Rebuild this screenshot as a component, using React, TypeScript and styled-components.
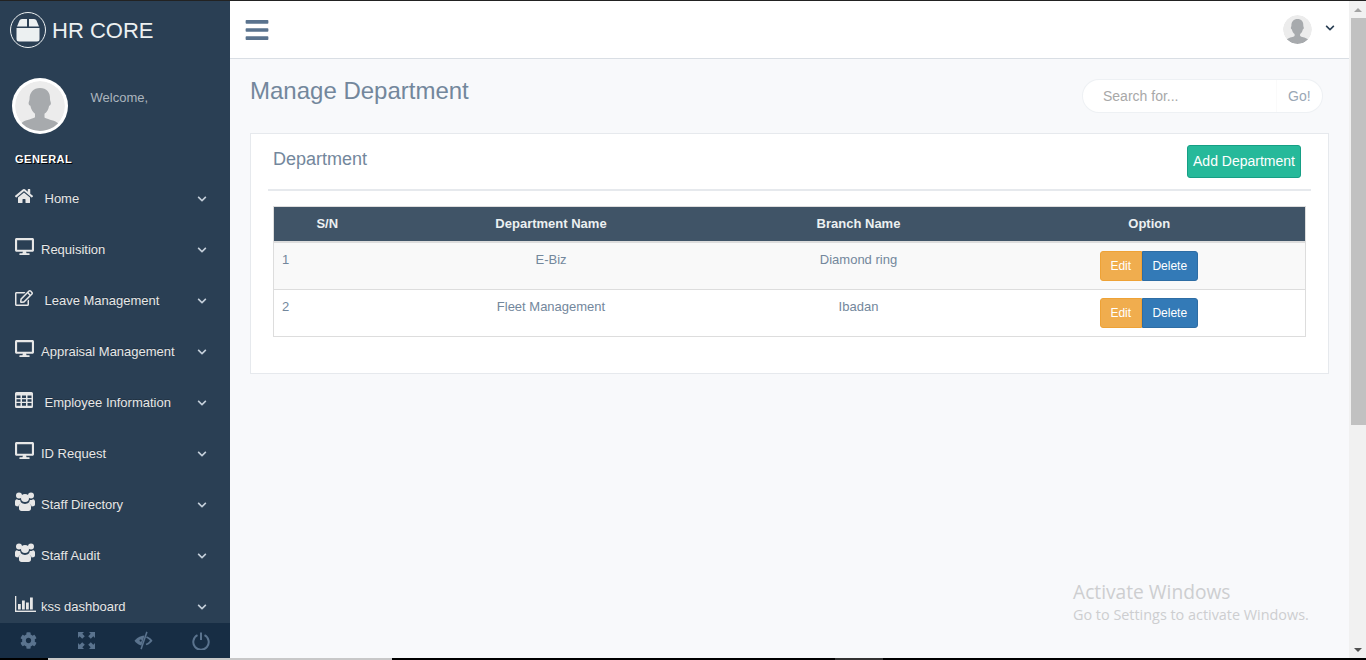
import React from "react";
import styled, { createGlobalStyle } from "styled-components";
import { FaBars, FaChevronDown, FaCog, FaDesktop, FaHome, FaRegEdit } from "react-icons/fa";

const Global = createGlobalStyle`
  html, body { margin: 0; padding: 0; height: 660px; overflow: hidden; }
  body { font-family: "Liberation Sans", Arial, sans-serif; font-size: 13px; color: #73879C; background: #F8F9FB; }
  * { box-sizing: border-box; }
`;

const Page = styled.div`
  width: 1366px; height: 660px; display: flex; flex-direction: column; position: relative; overflow: hidden;
`;
const TopEdge = styled.div` height: 1px; flex: none; background: #222; `;
const Body = styled.div` flex: 1; min-height: 0; display: flex; `;
const TaskStrip = styled.div` height: 2px; flex: none; display: flex; background: #000; `;
const TaskSegment = styled.div<{ $w: number; $c: string }>`
  width: ${p => p.$w}px; flex: none; background: ${p => p.$c};
`;

const Sidebar = styled.aside`
  width: 230px; flex: none; background: #2A3F54; display: flex; flex-direction: column; min-height: 0;
`;
const Brand = styled.div`
  height: 57px; flex: none; display: flex; align-items: center; padding: 1px 0 0 10px; gap: 6px;
  color: #ECF0F1; font-size: 22px;
`;
const BrandName = styled.span` margin-top: 2px; `;
const LogoRing = styled.div`
  width: 36px; height: 36px; border-radius: 50%; border: 1px solid #ECF0F1; display: flex;
  align-items: center; justify-content: center;
`;
const Profile = styled.div` height: 94px; flex: none; display: flex; padding: 20px 0 0 12px; `;
const ProfileAvatar = styled.div`
  width: 56px; height: 56px; border-radius: 50%; background: #fff; padding: 3px; flex: none;
`;
const Welcome = styled.div` margin: 12px 0 0 22.500px; color: #ACB5BE; font-size: 13px; line-height: 16px; `;
const SectionTitle = styled.h3`
  margin: 0; height: 21px; flex: none; padding-left: 15px; color: #fff; font-size: 11px; font-weight: 700;
  letter-spacing: .5px; line-height: 14px; text-transform: uppercase; text-shadow: 1px 1px #000;
`;
const Menu = styled.nav` flex: 1; min-height: 0; overflow: hidden; `;
const MenuItem = styled.a`
  height: 51px; display: flex; align-items: center; padding: 0 23px 0 15px; color: #E7E7E7; font-size: 13px;
  text-shadow: rgba(0,0,0,.25) 0 -1px 0;
`;
const MenuIcon = styled.span<{ $wide?: boolean }>`
  width: ${p => (p.$wide ? 29.5 : 26)}px; flex: none; display: flex; font-size: 18px; margin-top: -6px; color: #E7E7E7;
`;
const MenuLabel = styled.span` flex: 1; white-space: nowrap; `;
const MenuChevron = styled.span` display: flex; font-size: 10px; color: #C4CFDA; margin-top: 1px; `;
const SideFooter = styled.div`
  height: 35px; flex: none; background: #172D44; display: grid; grid-template-columns: repeat(4, 57.5px);
  color: #5A738E; font-size: 17px;
`;
const FooterIcon = styled.span` display: flex; align-items: center; justify-content: center; `;

const Main = styled.main` flex: 1; min-width: 0; display: flex; flex-direction: column; `;
const TopNav = styled.header`
  height: 58px; flex: none; background: #fff; border-bottom: 1px solid #D9DEE4; display: flex; align-items: center;
  padding: 0 14px 0 15px; justify-content: space-between;
`;
const Burger = styled.span` display: flex; color: #5A738E; font-size: 26px; margin-left: -1px; `;
const UserArea = styled.div` display: flex; align-items: center; gap: 13px; `;
const UserAvatar = styled.div` width: 29px; height: 29px; border-radius: 50%; overflow: hidden; `;
const UserChevron = styled.span` display: flex; font-size: 10px; color: #2A3F54; margin-top: -3px; `;
const Content = styled.div` flex: 1; min-height: 0; padding: 19px 20px 0; `;
const TitleRow = styled.div` height: 55px; display: flex; justify-content: space-between; `;
const PageTitle = styled.h3` margin: 0; font-size: 24px; font-weight: 400; line-height: 26px; color: #73879C; `;
const SearchBox = styled.div`
  width: 241px; height: 34px; margin: 1px 6px 0 0; border: 1px solid rgba(221,226,232,.49); border-radius: 25px; background: #fff; display: flex;
  font-size: 14px; line-height: 32px;
`;
const SearchInput = styled.div` flex: 1; padding-left: 20px; color: #A8A8A8; `;
const SearchGo = styled.div`
  width: 46px; padding-left: 11px; color: #9AA7B5; border-left: 1px solid #FAFAFA;
`;
const Panel = styled.section`
  height: 241px; background: #fff; border: 1px solid #E6E9ED; padding: 10px 17px 0;
`;
const PanelHead = styled.div`
  height: 47px; border-bottom: 2px solid #E6E9ED; display: flex; justify-content: space-between; padding: 0 10px 0 5px;
`;
const PanelTitle = styled.h2` margin: 5px 0 0; font-size: 18px; font-weight: 400; line-height: 20px; color: #73879C; `;
const AddButton = styled.button`
  width: 114px; height: 33px; margin-top: 1px; background: #26B99A; border: 1px solid #169F85; border-radius: 3px; color: #fff; font: 14px "Liberation Sans", Arial, sans-serif;
  padding: 0 0 2px;
`;
const Table = styled.table`
  width: 1032px; margin: 15px 0 0 5px; border-collapse: collapse; table-layout: fixed; border: 1px solid #DDD;
`;
const HeadRow = styled.tr` height: 35px; background: #405467; color: #ECF0F1; border-bottom: 2px solid #DDD; `;
const Th = styled.th<{ $shift?: boolean }>`
  font-size: 13px; font-weight: 700; text-align: center; padding: 0 ${p => (p.$shift ? 2 : 0)}px 0 0;
`;
const Row = styled.tr<{ $odd?: boolean }>`
  height: ${p => (p.$odd ? 48 : 47)}px; background: ${p => (p.$odd ? "#F9F9F9" : "#fff")}; border-top: 1px solid #DDD;
`;
const Td = styled.td<{ $left?: boolean }>`
  font-size: 13px; line-height: 18px; padding: 8px 8px 0; vertical-align: top; text-align: ${p => (p.$left ? "left" : "center")};
`;
const BtnGroup = styled.div` display: flex; justify-content: center; margin: 0 0 0 -3px; `;
const GroupBtn = styled.button<{ $kind: "edit" | "del" }>`
  height: 30px; padding: 0; font: 12px "Liberation Sans", Arial, sans-serif; color: #fff;
  width: ${p => (p.$kind === "edit" ? 42 : 56)}px;
  background: ${p => (p.$kind === "edit" ? "#F0AD4E" : "#337AB7")};
  border: 1px solid ${p => (p.$kind === "edit" ? "#EEA236" : "#2E6DA4")};
  border-radius: ${p => (p.$kind === "edit" ? "3px 0 0 3px" : "0 3px 3px 0")};
`;

const Scrollbar = styled.div` width: 17px; flex: none; background: #F1F1F1; display: flex; flex-direction: column; align-items: flex-end; `;
const ScrollEnd = styled.div` width: 17px; height: 17px; flex: none; display: flex; align-items: center; justify-content: center; `;
const ArrowUp = styled.div` border: 4px solid transparent; border-top: 0; border-bottom: 4px solid #A3A3A3; `;
const ArrowDown = styled.div` border: 4px solid transparent; border-bottom: 0; border-top: 4px solid #505050; `;
const ScrollThumb = styled.div` width: 15px; height: 407px; flex: none; background: #C1C1C1; `;
const ScrollRest = styled.div` flex: 1; `;

const Watermark = styled.div`
  position: absolute; left: 1073px; top: 578px; color: #CDCED0; font-family: "Open Sans", sans-serif;
`;
const WatermarkTitle = styled.div` font-size: 19.200px; line-height: 27px; `;
const WatermarkSub = styled.div` font-size: 14.400px; line-height: 19px; `;

const Person = () => (
  <svg width="100%" height="100%" viewBox="0 0 50 50" style={{ display: "block", borderRadius: "50%" }}>
    <circle cx="25" cy="25" r="25" fill="#ECECEC" />
    <path d="M25 7c-6.500 0-10.500 4.500-10.500 11 0 2-.9 2.700-.9 4.200 0 1.500 1 2.300 1.800 2.600.6 3.500 2.400 6.400 4.600 7.900v3.600c-1.500 1.600-9 2.400-12.500 5-1.500 1.100-2 2.200-2.300 3.500C9.200 47 16.500 50 25 50s15.800-3 19.300-5.100c-.3-1.300-.8-2.400-2.300-3.500-3.500-2.600-11-3.400-12.500-5v-3.600c2.200-1.500 4-4.400 4.600-7.900.8-.3 1.800-1.100 1.800-2.600 0-1.500-.9-2.200-.9-4.200C35.500 11.500 31.500 7 25 7z" fill="#A7AAAD" />
  </svg>
);

const Logo = () => (
  <svg width="26" height="26" viewBox="0 0 26 26">
    <path d="M2 9.500 4.500 3.500Q5 2 7 2H12V9.500Z M14 2H19Q21 2 21.500 3.500L24 9.500H14Z" fill="#ECF0F1" />
    <path d="M1.500 11H24.500V22Q24.500 24.500 22 24.500H4Q1.500 24.500 1.500 22Z" fill="#ECF0F1" />
  </svg>
);

const TableIcon = () => (
  <svg width="18" height="16" viewBox="0 0 18 16" fill="currentColor">
    <path fillRule="evenodd" d="M1.500 0H16.500A1.500 1.500 0 0 1 18 1.500V14.500A1.500 1.500 0 0 1 16.500 16H1.500A1.500 1.500 0 0 1 0 14.500V1.500A1.500 1.500 0 0 1 1.500 0ZM1.500 3.500V6H5.500V3.500ZM7 3.500V6H11V3.500ZM12.500 3.500V6H16.500V3.500ZM1.500 7.300V9.700H5.500V7.300ZM7 7.300V9.700H11V7.300ZM12.500 7.300V9.700H16.500V7.300ZM1.500 11V13.800H5.500V11ZM7 11V13.800H11V11ZM12.500 11V13.800H16.500V11Z" />
  </svg>
);

const UsersIcon = () => (
  <svg width="20" height="19" viewBox="0 0 20 19" fill="currentColor">
    <circle cx="4" cy="3.500" r="3" />
    <circle cx="16" cy="3.500" r="3" />
    <circle cx="10" cy="6" r="4" />
    <path d="M0 9.500C0 8 1 7 2 7.200 3 8 4.500 8.300 5.200 8 5.400 9.500 6 10.500 7 11.300 4.800 11.700 3.700 13.200 3.400 14.500 1 14.500 0 13.500 0 12.500Z" />
    <path d="M20 9.500C20 8 19 7 18 7.200 17 8 15.500 8.300 14.800 8 14.600 9.500 14 10.500 13 11.300 15.200 11.700 16.300 13.200 16.600 14.500 19 14.500 20 13.500 20 12.500Z" />
    <path d="M6.500 10.800C8 12.300 12 12.300 13.500 10.800 15 11 16 12.500 16 14.500V16.500C16 18 15 19 13.500 19H6.500C5 19 4 18 4 16.500V14.500C4 12.500 5 11 6.500 10.800Z" />
  </svg>
);

const BarsIcon = () => (
  <svg width="21" height="16" viewBox="0 0 21 16" fill="currentColor">
    <rect x="0" y="0" width="1.300" height="16" />
    <rect x="0" y="14.600" width="21" height="1.400" />
    <rect x="3" y="8" width="2.800" height="5.500" />
    <rect x="7" y="4.500" width="2.800" height="9" />
    <rect x="11" y="6.500" width="2.800" height="7" />
    <rect x="15" y="1.500" width="2.800" height="12" />
  </svg>
);

const FullscreenIcon = () => (
  <svg width="17" height="17" viewBox="0 0 17 17" fill="currentColor">
    <path d="M0 0H6L4.300 1.700 6.800 4.200 4.200 6.800 1.700 4.300 0 6Z" />
    <path d="M17 0V6L15.300 4.300 12.800 6.800 10.200 4.200 12.700 1.700 11 0Z" />
    <path d="M0 17V11L1.700 12.700 4.200 10.200 6.800 12.800 4.300 15.300 6 17Z" />
    <path d="M17 17H11L12.700 15.300 10.200 12.800 12.800 10.200 15.300 12.700 17 11Z" />
  </svg>
);

const EyeClose = () => (
  <svg width="19" height="19" viewBox="0 0 19 19" fill="currentColor">
    <path d="M12.200 0.500 13.600 1.200 7.800 18.500 6.400 17.800Z" />
    <path d="M10.500 4.500C5.500 5 2 7.800 0.500 9.700c1.200 1.900 3.600 4 6.900 4.800Z" />
    <circle cx="6.600" cy="9.600" r="1.100" fill="#172D44" />
    <path d="M12.800 5.200C15.500 6.200 17.500 8 18.500 9.700c-1.200 1.700-3.300 3.500-6.200 4.600l-.6-1.600c1.900-.7 3.400-1.900 4.300-3-.9-1.100-2.400-2.200-3.900-2.900Z" />
  </svg>
);

const PowerIcon = () => (
  <svg width="18" height="18" viewBox="0 0 18 18" fill="none" stroke="currentColor" strokeWidth="2">
    <path d="M5.500 3.200A7.700 7.700 0 1 0 12.500 3.200" />
    <path d="M9 0.500V8" />
  </svg>
);

const items: { label: string; icon: React.ReactNode; wide?: boolean }[] = [
  { label: "Home", icon: <FaHome />, wide: true },
  { label: "Requisition", icon: <FaDesktop size={19} /> },
  { label: "Leave Management", icon: <FaRegEdit />, wide: true },
  { label: "Appraisal Management", icon: <FaDesktop size={19} /> },
  { label: "Employee Information", icon: <TableIcon />, wide: true },
  { label: "ID Request", icon: <FaDesktop size={19} /> },
  { label: "Staff Directory", icon: <UsersIcon /> },
  { label: "Staff Audit", icon: <UsersIcon /> },
  { label: "kss dashboard", icon: <BarsIcon /> },
];

const rows = [
  { n: 1, dept: "E-Biz", branch: "Diamond ring" },
  { n: 2, dept: "Fleet Management", branch: "Ibadan" },
];

export default function App() {
  return (
    <Page>
      <Global />
      <TopEdge />
      <Body>
        <Sidebar>
          <Brand>
            <LogoRing><Logo /></LogoRing>
            <BrandName>HR CORE</BrandName>
          </Brand>
          <Profile>
            <ProfileAvatar><Person /></ProfileAvatar>
            <Welcome>Welcome,</Welcome>
          </Profile>
          <SectionTitle>General</SectionTitle>
          <Menu>
            {items.map(i => (
              <MenuItem key={i.label}>
                <MenuIcon $wide={i.wide}>{i.icon}</MenuIcon>
                <MenuLabel>{i.label}</MenuLabel>
                <MenuChevron><FaChevronDown /></MenuChevron>
              </MenuItem>
            ))}
          </Menu>
          <SideFooter>
            <FooterIcon><FaCog /></FooterIcon>
            <FooterIcon><FullscreenIcon /></FooterIcon>
            <FooterIcon><EyeClose /></FooterIcon>
            <FooterIcon><PowerIcon /></FooterIcon>
          </SideFooter>
        </Sidebar>
        <Main>
          <TopNav>
            <Burger><FaBars /></Burger>
            <UserArea>
              <UserAvatar><Person /></UserAvatar>
              <UserChevron><FaChevronDown /></UserChevron>
            </UserArea>
          </TopNav>
          <Content>
            <TitleRow>
              <PageTitle>Manage Department</PageTitle>
              <SearchBox>
                <SearchInput>Search for...</SearchInput>
                <SearchGo>Go!</SearchGo>
              </SearchBox>
            </TitleRow>
            <Panel>
              <PanelHead>
                <PanelTitle>Department</PanelTitle>
                <AddButton>Add Department</AddButton>
              </PanelHead>
              <Table>
                <colgroup>
                  <col width="107" /><col width="341" /><col width="274" /><col width="310" />
                </colgroup>
                <thead>
                  <HeadRow><Th>S/N</Th><Th>Department Name</Th><Th>Branch Name</Th><Th $shift>Option</Th></HeadRow>
                </thead>
                <tbody>
                  {rows.map(r => (
                    <Row key={r.n} $odd={r.n === 1}>
                      <Td $left>{r.n}</Td>
                      <Td>{r.dept}</Td>
                      <Td>{r.branch}</Td>
                      <Td>
                        <BtnGroup>
                          <GroupBtn $kind="edit">Edit</GroupBtn>
                          <GroupBtn $kind="del">Delete</GroupBtn>
                        </BtnGroup>
                      </Td>
                    </Row>
                  ))}
                </tbody>
              </Table>
            </Panel>
          </Content>
        </Main>
        <Scrollbar>
          <ScrollEnd><ArrowUp /></ScrollEnd>
          <ScrollThumb />
          <ScrollRest />
          <ScrollEnd><ArrowDown /></ScrollEnd>
        </Scrollbar>
      </Body>
      <TaskStrip>
        <TaskSegment $w={48} $c="#000" />
        <TaskSegment $w={344} $c="#C8C8C8" />
        <TaskSegment $w={443} $c="#000" />
        <TaskSegment $w={48} $c="#333" />
      </TaskStrip>
      <Watermark>
        <WatermarkTitle>Activate Windows</WatermarkTitle>
        <WatermarkSub>Go to Settings to activate Windows.</WatermarkSub>
      </Watermark>
    </Page>
  );
}
